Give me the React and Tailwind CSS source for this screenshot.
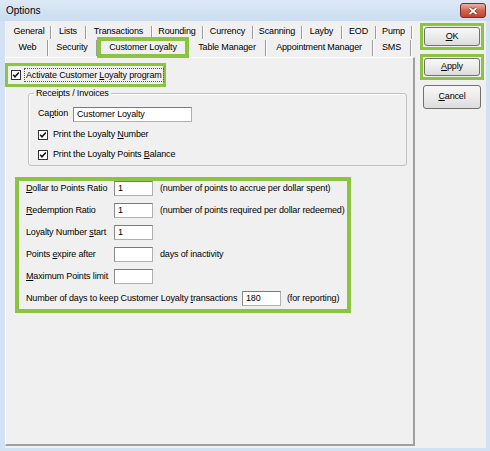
import React from "react";

const ROW1 = [
  ["General", 43],
  ["Lists", 35],
  ["Transactions", 66],
  ["Rounding", 51],
  ["Currency", 50],
  ["Scanning", 49],
  ["Layby", 40],
  ["EOD", 34],
  ["Pump", 36],
];

const ROW2 = [
  ["Web", 40],
  ["Security", 49],
  ["Customer Loyalty", 92, true],
  ["Table Manager", 77],
  ["Appointment Manager", 107],
  ["SMS", 38],
];

function U({ children }) {
  return <span className="underline underline-offset-[1px]">{children}</span>;
}

function Check({ checked = true }) {
  return (
    <span className="w-[10px] h-[10px] shrink-0 border border-[#333] bg-white flex items-center justify-center">
      {checked && (
        <svg width="8" height="8" viewBox="0 0 8 8">
          <path d="M1.2 3.8 L3 5.8 L6.8 1.6" fill="none" stroke="#111" strokeWidth="1.5" />
        </svg>
      )}
    </span>
  );
}

function Field({ value = "", w = "w-[39px]" }) {
  return (
    <div
      className={`${w} h-[15px] shrink-0 bg-white border border-[#b0b0b0] border-t-[#7a7a7a] border-l-[#8a8a8a] pl-[3px] leading-[13px]`}
    >
      {value}
    </div>
  );
}

function Tab({ label, width, selected, tall }) {
  if (selected) {
    return (
      <div
        style={{ width }}
        className="relative z-10 -mt-[2px] h-[21px] border-[4px] border-[#8cc43f] bg-[#f0f0f0] flex items-center justify-center"
      >
        {label}
      </div>
    );
  }
  return (
    <div style={{ width }} className={`flex items-center justify-center ${tall ? "h-[17px]" : "h-[14px]"}`}>
      <span className="flex-1 text-center">{label}</span>
      <span className={`w-[1px] bg-[#9c9c9c] shadow-[1px_0_0_#ffffff] ${tall ? "h-[16px]" : "h-[13px]"}`} />
    </div>
  );
}

function Button({ children }) {
  return (
    <div className="w-full h-full rounded-[3px] border border-[#707070] bg-linear-to-b from-[#f7f7f7] via-[#ececec] to-[#dcdcdc] flex items-center justify-center">
      {children}
    </div>
  );
}

export default function App() {
  return (
    <div className="w-[490px] h-[451px] bg-[#d2e1f3] flex flex-col overflow-hidden whitespace-nowrap font-['Liberation_Sans',Arial,sans-serif] text-[9px] tracking-[-0.15px] text-black">
      {/* title bar */}
      <div className="h-[21px] shrink-0 flex items-center justify-between pl-[6px] pr-[4px] bg-linear-to-b from-[#dde9f6] to-[#cadcf0]">
        <span className="text-[10px] tracking-normal">Options</span>
        <div className="w-[26px] h-[15px] rounded-[3px] border border-[#7a2e24] bg-linear-to-b from-[#eab0a2] via-[#d4654f] to-[#c0432e] flex items-center justify-center">
          <svg width="10" height="8" viewBox="0 0 10 8">
            <path d="M1.5 1 L8.5 7 M8.5 1 L1.5 7" stroke="#6b2218" strokeWidth="3" />
            <path d="M1.5 1 L8.5 7 M8.5 1 L1.5 7" stroke="#ffffff" strokeWidth="1.8" />
          </svg>
        </div>
      </div>

      {/* client area */}
      <div className="flex flex-1 ml-[5px] mr-[4px] mb-[3px] bg-[#f0f0f0]">
        <div className="w-[410px] flex flex-col">
          <div className="mt-[4px] h-[14px] flex pl-[3px]">
            {ROW1.map(([l, w]) => (
              <Tab key={l} label={l} width={w} />
            ))}
          </div>
          <div className="h-[18px] flex items-start pl-[3px]">
            {ROW2.map(([l, w, s]) => (
              <Tab key={l} label={l} width={w} selected={s} tall />
            ))}
          </div>

          {/* tab page */}
          <div className="h-[389px] border-l border-t border-white border-r-2 border-b-2 border-r-[#a0a0a0] border-b-[#a0a0a0] flex flex-col">
            <div className="mt-[5px] -ml-[1px] w-[161px] h-[24px] border-[3px] border-[#8cc43f] flex items-center pl-[3px]">
              <Check />
              <span className="ml-[3px] px-[1px] leading-[12px] border border-dotted border-[#555]">
                Activate Customer <U>L</U>oyalty program
              </span>
            </div>

            <fieldset className="mt-[1px] ml-[22px] w-[379px] h-[78px] border border-[#c0c0c0] rounded-[3px] shadow-[inset_1px_1px_0_#ffffff]">
              <legend className="ml-[5px] px-[2px] leading-[11px]">Receipts / Invoices</legend>
              <div className="pl-[9px] flex flex-col">
                <div className="mt-[7px] h-[16px] flex items-center">
                  <span className="w-[35px]">
                    Ca<U>p</U>tion
                  </span>
                  <Field value="Customer Loyalty" w="w-[119px]" />
                </div>
                <div className="mt-[6px] h-[14px] flex items-center">
                  <Check />
                  <span className="ml-[5px]">
                    Print the Loyalty <U>N</U>umber
                  </span>
                </div>
                <div className="mt-[6px] h-[14px] flex items-center">
                  <Check />
                  <span className="ml-[5px]">
                    Print the Loyalty Points <U>B</U>alance
                  </span>
                </div>
              </div>
            </fieldset>

            <div className="mt-[11px] ml-[9px] w-[336px] h-[136px] border-[4px] border-[#8cc43f] pl-[7px] flex flex-col gap-[7px]">
              <div className="h-[15px] flex items-center">
                <span className="w-[88px]">
                  <U>D</U>ollar to Points Ratio
                </span>
                <Field value="1" />
                <span className="ml-[7px]">(number of points to accrue per dollar spent)</span>
              </div>
              <div className="h-[15px] flex items-center">
                <span className="w-[88px]">
                  <U>R</U>edemption Ratio
                </span>
                <Field value="1" />
                <span className="ml-[7px]">(number of points required per dollar redeemed)</span>
              </div>
              <div className="h-[15px] flex items-center">
                <span className="w-[88px]">
                  Loyalty Number <U>s</U>tart
                </span>
                <Field value="1" />
              </div>
              <div className="h-[15px] flex items-center">
                <span className="w-[88px]">
                  Points <U>e</U>xpire after
                </span>
                <Field />
                <span className="ml-[7px]">days of inactivity</span>
              </div>
              <div className="h-[15px] flex items-center">
                <span className="w-[88px]">
                  <U>M</U>aximum Points limit
                </span>
                <Field />
              </div>
              <div className="h-[15px] flex items-center">
                <span className="w-[216px]">
                  Number of days to keep Customer Loyalty <U>t</U>ransactions
                </span>
                <Field value="180" />
                <span className="ml-[6px]">(for reporting)</span>
              </div>
            </div>
          </div>
        </div>

        {/* buttons */}
        <div className="ml-[5px] w-[64px] flex flex-col">
          <div className="mt-[2px] h-[27px] border-[3px] border-[#8cc43f] p-[1px]">
            <Button>
              <U>O</U>K
            </Button>
          </div>
          <div className="mt-[4px] h-[26px] border-[3px] border-[#8cc43f] p-[1px]">
            <Button>
              <U>A</U>pply
            </Button>
          </div>
          <div className="mt-[5px] ml-[3px] w-[58px] h-[24px]">
            <Button>
              <U>C</U>ancel
            </Button>
          </div>
        </div>
      </div>
    </div>
  );
}
